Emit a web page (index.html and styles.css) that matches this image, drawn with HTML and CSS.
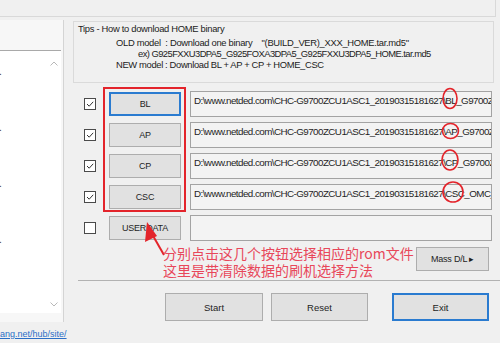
FILE: index.html
```html
<!DOCTYPE html>
<html>
<head>
<meta charset="utf-8">
<link rel="stylesheet" href="styles.css">
</head>
<body>
<div class="top-box"></div>
<div class="main">
  <div class="left-col">
    <div class="left-panel">
      <div class="list">
        <div class="list-items">
          <div class="item">.</div>
          <div class="item">.</div>
          <div class="item">.</div>
          <div class="item">.</div>
        </div>
        <div class="scroll">
          <svg class="chev" width="8" height="5" viewBox="0 0 8 5"><polyline points="0.5,4.5 4,1 7.5,4.5" fill="none" stroke="#b8b8b8" stroke-width="1"/></svg>
          <svg class="chev" width="8" height="5" viewBox="0 0 8 5"><polyline points="0.5,0.5 4,4 7.5,0.5" fill="none" stroke="#b8b8b8" stroke-width="1"/></svg>
        </div>
      </div>
    </div>
    <a class="link" href="#">ang.net/hub/site/</a>
  </div>
  <div class="right-col">
    <div class="tips">
      <div class="tips-title">Tips - How to download HOME binary</div>
      <div class="tips-line l-old">OLD model  : Download one binary    "(BUILD_VER)_XXX_HOME.tar.md5"</div>
      <div class="tips-line l-ex">ex) G925FXXU3DPA5_G925FOXA3DPA5_G925FXXU3DPA5_HOME.tar.md5</div>
      <div class="tips-line l-new">NEW model : Download BL + AP + CP + HOME_CSC</div>
    </div>
    <div class="rows">
      <div class="row">
        <span class="cb"><svg width="10" height="10" viewBox="0 0 10 10"><polyline points="2,5 4.2,7.2 8.2,2.8" fill="none" stroke="#333" stroke-width="1"/></svg></span>
        <button class="btn slot focus">BL</button>
        <div class="field">D:\www.netded.com\CHC-G9700ZCU1ASC1_20190315181627\BL_G9700ZCU1ASC1_CL15645071_QB22314541_REV00_user_low_ship.tar.md5</div>
      </div>
      <div class="row">
        <span class="cb"><svg width="10" height="10" viewBox="0 0 10 10"><polyline points="2,5 4.2,7.2 8.2,2.8" fill="none" stroke="#333" stroke-width="1"/></svg></span>
        <button class="btn slot">AP</button>
        <div class="field">D:\www.netded.com\CHC-G9700ZCU1ASC1_20190315181627\AP_G9700ZCU1ASC1_CL15645071_QB22314541_REV00_user_low_ship.tar.md5</div>
      </div>
      <div class="row">
        <span class="cb"><svg width="10" height="10" viewBox="0 0 10 10"><polyline points="2,5 4.2,7.2 8.2,2.8" fill="none" stroke="#333" stroke-width="1"/></svg></span>
        <button class="btn slot">CP</button>
        <div class="field">D:\www.netded.com\CHC-G9700ZCU1ASC1_20190315181627\CP_G9700ZCU1ASC1_CP12345678_CL15645071_REV00_user_low_ship.tar.md5</div>
      </div>
      <div class="row">
        <span class="cb"><svg width="10" height="10" viewBox="0 0 10 10"><polyline points="2,5 4.2,7.2 8.2,2.8" fill="none" stroke="#333" stroke-width="1"/></svg></span>
        <button class="btn slot">CSC</button>
        <div class="field">D:\www.netded.com\CHC-G9700ZCU1ASC1_20190315181627\CSC_OMC_OCM_G9700CHC1ASC1_CL15645071_QB22314541_REV00_user_low_ship.tar.md5</div>
      </div>
      <div class="row">
        <span class="cb"></span>
        <button class="btn slot">USERDATA</button>
        <div class="field"></div>
      </div>
    </div>
    <div class="mass-row">
      <button class="btn mass">Mass D/L ▸</button>
    </div>
    <div class="sep"></div>
    <div class="actions">
      <button class="btn act start">Start</button>
      <button class="btn act reset">Reset</button>
      <button class="btn act exit focus">Exit</button>
    </div>
  </div>
</div>
<div class="overlay">
  <svg class="marks" width="500" height="343" viewBox="0 0 500 343">
    <rect x="104" y="88" width="81" height="123" fill="none" stroke="#e3242b" stroke-width="2"/>
    <ellipse cx="450" cy="98.5" rx="7" ry="10" fill="none" stroke="#e3242b" stroke-width="1.6"/>
    <ellipse cx="450.5" cy="131" rx="8" ry="7.5" fill="none" stroke="#e3242b" stroke-width="1.6"/>
    <ellipse cx="450" cy="160" rx="8" ry="10" fill="none" stroke="#e3242b" stroke-width="1.6"/>
    <ellipse cx="453" cy="192" rx="10" ry="10" fill="none" stroke="#e3242b" stroke-width="1.6"/>
    <line x1="164" y1="255" x2="152" y2="234" stroke="#e3242b" stroke-width="2"/>
    <polygon points="147,222 145,242 157,236" fill="#e3242b"/>
  </svg>
  <div class="note">
    <div>分别点击这几个按钮选择相应的rom文件</div>
    <div>这里是带清除数据的刷机选择方法</div>
  </div>
</div>
</body>
</html>
```

FILE: styles.css
```css
* { box-sizing: border-box; }
html, body {
  margin: 0;
  padding: 0;
}
body {
  width: 500px;
  height: 343px;
  overflow: hidden;
  background: #f0f0f0;
  font-family: "Liberation Sans", Arial, sans-serif;
  font-size: 9.5px;
  color: #1e1e1e;
  position: relative;
}
.top-box {
  width: 496px;
  height: 17px;
  border-bottom: 1px solid #d9d9d9;
  border-right: 1px solid #d9d9d9;
}
.main {
  display: flex;
  align-items: flex-start;
}
.left-col {
  width: 73px;
  flex: none;
  display: flex;
  flex-direction: column;
}
.left-panel {
  margin-top: 3px;
  width: 64px;
  height: 302px;
  border-right: 1px solid #d4d4d4;
  background: #f7f7f7;
  padding-top: 30px;
}
.list {
  width: 61px;
  height: 263px;
  background: #fff;
  border-top: 1px solid #a9a9a9;
  display: flex;
  position: relative;
}
.list-items {
  flex: 1;
  padding-top: 16px;
}
.item {
  height: 56px;
  line-height: 10px;
  font-size: 10px;
  color: #333;
  margin-left: -1px;
}
.scroll {
  width: 14px;
  display: flex;
  flex-direction: column;
  justify-content: space-between;
  align-items: center;
  padding: 10px 0 6px;
}
.chev { display: block; }
.link {
  margin-top: 6px;
  font-size: 9px;
  line-height: 12px;
  color: #2b6fc7;
  text-decoration: underline;
  white-space: nowrap;
}
.right-col {
  width: 427px;
  flex: none;
  display: flex;
  flex-direction: column;
}
.tips {
  margin-top: 4px;
  width: 421px;
  height: 62px;
  border: 1px solid #dadada;
  padding: 1px 0 0 4px;
  font-size: 9.4px;
  letter-spacing: -0.3px;
  line-height: 11px;
  color: #222;
}
.tips-title, .tips-line { white-space: pre; }
.tips-title { margin-bottom: 3px; }
.l-old, .l-new { padding-left: 38px; }
.l-new { letter-spacing: -0.35px; }
.l-ex { padding-left: 60px; letter-spacing: -0.55px; }
.rows {
  margin-top: 5px;
  display: flex;
  flex-direction: column;
}
.row {
  height: 31px;
  display: flex;
  align-items: center;
}
.cb {
  margin-left: 11px;
  width: 12px;
  height: 12px;
  border: 1px solid #4a4a4a;
  background: #fff;
  flex: none;
  display: flex;
  align-items: center;
  justify-content: center;
}
.cb svg { display: block; }
.btn {
  font-family: "Liberation Sans", Arial, sans-serif;
  font-size: 9px;
  letter-spacing: -0.2px;
  color: #1e1e1e;
  background: #e1e1e1;
  border: 1px solid #adadad;
  padding: 0;
  margin: 0;
  flex: none;
}
.btn.focus {
  border: 2px solid #2a7bd0;
}
.slot {
  margin-left: 13px;
  width: 72px;
  height: 24px;
}
.field {
  margin-left: 9px;
  width: 302px;
  height: 26px;
  border: 1px solid #a3a3a3;
  background: #f3f3f3;
  padding: 3px 0 0 3px;
  line-height: 11px;
  font-size: 9.8px;
  letter-spacing: -0.55px;
  white-space: nowrap;
  overflow: hidden;
  flex: none;
}
.mass-row {
  margin-top: 4px;
  display: flex;
  justify-content: flex-end;
  padding-right: 11px;
}
.mass {
  width: 73px;
  height: 24px;
}
.sep {
  margin-top: 9px;
  margin-left: 5px;
  height: 1px;
  background: #b2b2b2;
}
.actions {
  margin-top: 12px;
  display: flex;
  padding-left: 92px;
}
.act {
  height: 28px;
  width: 97px;
  font-size: 9.5px;
  letter-spacing: 0;
}
.start { width: 98px; }
.reset { margin-left: 8px; }
.exit { margin-left: 24px; }
.overlay {
  position: absolute;
  left: 0;
  top: 0;
  width: 500px;
  height: 343px;
  pointer-events: none;
}
.marks {
  position: absolute;
  left: 0;
  top: 0;
}
.note {
  position: absolute;
  left: 163px;
  top: 245px;
  font-family: "Noto Sans CJK SC", sans-serif;
  font-size: 14px;
  line-height: 17px;
  color: #e8475a;
  white-space: nowrap;
}
```
